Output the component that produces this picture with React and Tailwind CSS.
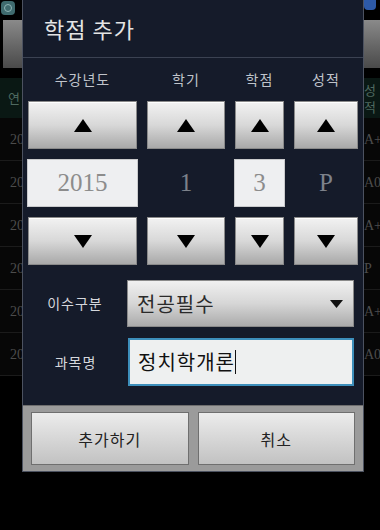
const rows = ['A+', 'A0', 'A+', 'P', 'A+', 'A0']

const kr = { fontFamily: '"Noto Sans CJK KR", "Noto Sans", sans-serif' }
const serif = { fontFamily: '"Liberation Serif", "DejaVu Serif", serif' }

function Tri({ down }) {
  return (
    <svg width="18" height="13" viewBox="0 0 18 13">
      <polygon points={down ? '0,0 18,0 9,13' : '9,0 18,13 0,13'} fill="#000" />
    </svg>
  )
}

function Spin({ down }) {
  return (
    <button className="flex h-[48px] items-center justify-center border border-[#8a8a8a] bg-gradient-to-b from-[#f2f2f2] via-[#d8d8d8] to-[#a9a9a9] shadow-[inset_0_1px_0_#fff]">
      <Tri down={down} />
    </button>
  )
}

function Value({ children, boxed }) {
  return (
    <div
      style={serif}
      className={
        boxed
          ? '-mx-[1px] flex h-[48px] items-center justify-center border border-[#c9cacc] bg-[#eeeff1] text-[25px] text-[#8c8c8c]'
          : 'flex h-[48px] items-center justify-center text-[25px] text-[#7d828b]'
      }
    >
      {children}
    </div>
  )
}

function Background() {
  return (
    <div className="flex h-full flex-col bg-black">
      <div className="flex h-[16px] justify-between">
        <div className="m-[1px] flex h-[14px] w-[14px] items-center justify-center rounded-sm bg-[#3f6b6e]">
          <div className="h-[8px] w-[8px] rounded-full border border-[#8fb5b5]" />
        </div>
        <div className="mr-[4px] h-[10px] w-[12px] rounded-b-sm bg-[#2d5aa8]" />
      </div>
      <div className="mt-[4px] flex h-[48px] justify-between">
        <div className="ml-[3px] w-[20px] bg-gradient-to-b from-[#8a8a8a] to-[#4a4a4a]" />
        <div className="w-[16px] bg-gradient-to-b from-[#8a8a8a] to-[#4a4a4a]" />
      </div>
      <div style={kr} className="mt-[10px] flex h-[40px] items-center justify-between bg-[#0a1814] pl-[8px] pr-[2px] text-[13px] text-[#4f6a60]">
        <span>연</span>
        <span className="flex w-[14px] flex-col leading-[17px]">
          <span>성</span>
          <span>적</span>
        </span>
      </div>
      {rows.map((r, i) => (
        <div
          key={i}
          style={serif}
          className="flex h-[43px] items-center justify-between border-b border-[#1b1b1b] bg-[#070707] pl-[10px] pr-[2px] text-[14px] text-[#4c4c4c]"
        >
          <span>20</span>
          <span className="w-[14px]">{r}</span>
        </div>
      ))}
    </div>
  )
}

export default function App() {
  return (
    <div className="relative h-[530px] w-[380px] overflow-hidden bg-black">
      <Background />

      <div className="absolute left-[22px] top-0 flex h-[472px] w-[342px] flex-col border border-[#4c5260] border-t-0 bg-[#151b2a]">
        <div style={kr} className="flex h-[58px] items-center border-b border-[#3b4252] pl-[21px] text-[22px] tracking-[1px] text-[#e4e4e4]">
          학점 추가
        </div>

        <div className="pl-[5px]">
          <div style={kr} className="grid h-[43px] grid-cols-[109px_78px_49px_64px] items-center gap-x-[10px] text-center text-[14px] tracking-[1px] text-[#c0c4cb]">
            <span>수강년도</span>
            <span>학기</span>
            <span>학점</span>
            <span>성적</span>
          </div>
          <div className="grid grid-cols-[109px_78px_49px_64px] gap-x-[10px] gap-y-[10px]">
            <Spin />
            <Spin />
            <Spin />
            <Spin />
            <Value boxed>2015</Value>
            <Value>1</Value>
            <Value boxed>3</Value>
            <Value>P</Value>
            <Spin down />
            <Spin down />
            <Spin down />
            <Spin down />
          </div>
        </div>

        <div style={kr} className="mt-[15px] flex flex-col gap-[11px] pr-[9px]">
          <div className="flex items-center">
            <span className="w-[104px] text-center text-[14px] tracking-[1px] text-[#d5d7dc]">이수구분</span>
            <div className="flex h-[47px] flex-1 items-center justify-between border border-[#8a8a8a] bg-gradient-to-b from-[#f0f0f0] via-[#d6d6d6] to-[#ababab] pl-[9px] pr-[10px] text-[20px] tracking-[1px] text-[#2a2a2a]">
              <span>전공필수</span>
              <svg width="13" height="8" viewBox="0 0 13 8">
                <polygon points="0,0 13,0 6.5,8" fill="#111" />
              </svg>
            </div>
          </div>
          <div className="flex items-center">
            <span className="w-[105px] text-center text-[14px] tracking-[1px] text-[#d5d7dc]">과목명</span>
            <div className="flex h-[48px] flex-1 items-center border-[2px] border-[#3d8fbb] bg-[#eef0f0] pl-[8px] text-[20px] tracking-[1px] text-[#111]">
              <span>정치학개론</span>
              <span className="h-[24px] w-[1px] bg-[#111]" />
            </div>
          </div>
        </div>

        <div style={kr} className="mt-auto flex h-[66px] gap-[9px] border-t border-[#6e6e6e] bg-[#9b9b9b] px-[8px] py-[6px]">
          <button className="flex-1 border border-[#6f6f6f] bg-gradient-to-b from-[#ececec] to-[#c2c2c2] text-[16px] tracking-[1px] text-[#222]">
            추가하기
          </button>
          <button className="flex-1 border border-[#6f6f6f] bg-gradient-to-b from-[#ececec] to-[#c2c2c2] text-[16px] tracking-[1px] text-[#222]">
            취소
          </button>
        </div>
      </div>
    </div>
  )
}
